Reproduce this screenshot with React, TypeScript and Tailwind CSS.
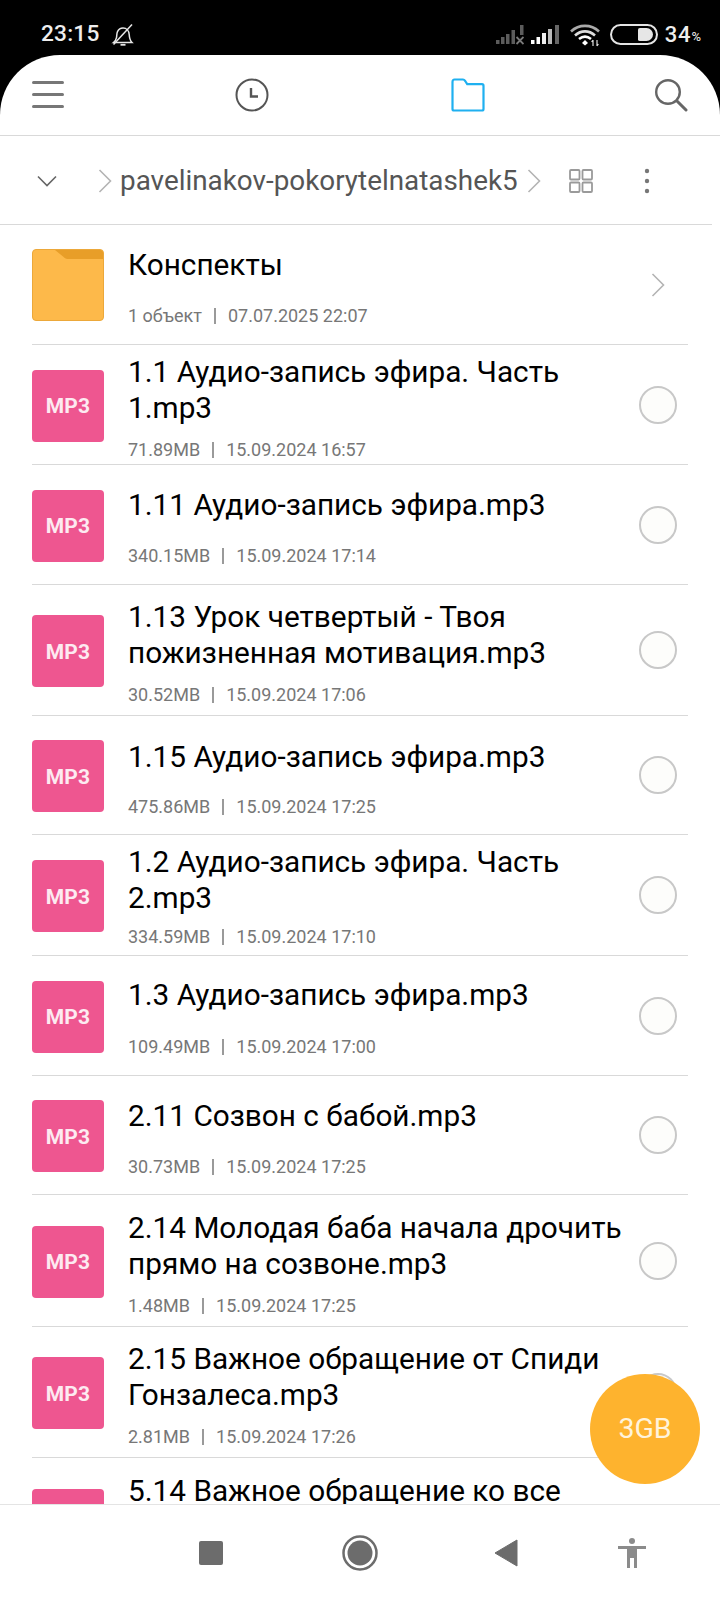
const font = { fontFamily: 'Roboto, "Noto Sans", sans-serif' };

type Row = { title: string[]; meta: [string, string]; h: string; pt: string; mt: string };

const rows: Row[] = [
  { title: ["1.1 Аудио-запись эфира. Часть", "1.mp3"], meta: ["71.89MB", "15.09.2024 16:57"], h: "h-[120px]", pt: "pt-[9px]", mt: "mt-[13px]" },
  { title: ["1.11 Аудио-запись эфира.mp3"], meta: ["340.15MB", "15.09.2024 17:14"], h: "h-[120px]", pt: "pt-[22px]", mt: "mt-[22px]" },
  { title: ["1.13 Урок четвертый - Твоя", "пожизненная мотивация.mp3"], meta: ["30.52MB", "15.09.2024 17:06"], h: "h-[131px]", pt: "pt-[14px]", mt: "mt-[13px]" },
  { title: ["1.15 Аудио-запись эфира.mp3"], meta: ["475.86MB", "15.09.2024 17:25"], h: "h-[119px]", pt: "pt-[23px]", mt: "mt-[21px]" },
  { title: ["1.2 Аудио-запись эфира. Часть", "2.mp3"], meta: ["334.59MB", "15.09.2024 17:10"], h: "h-[121px]", pt: "pt-[9px]", mt: "mt-[10px]" },
  { title: ["1.3 Аудио-запись эфира.mp3"], meta: ["109.49MB", "15.09.2024 17:00"], h: "h-[120px]", pt: "pt-[21px]", mt: "mt-[23px]" },
  { title: ["2.11 Созвон с бабой.mp3"], meta: ["30.73MB", "15.09.2024 17:25"], h: "h-[119px]", pt: "pt-[22px]", mt: "mt-[22px]" },
  { title: ["2.14 Молодая баба начала дрочить", "прямо на созвоне.mp3"], meta: ["1.48MB", "15.09.2024 17:25"], h: "h-[132px]", pt: "pt-[15px]", mt: "mt-[13px]" },
  { title: ["2.15 Важное обращение от Спиди", "Гонзалеса.mp3"], meta: ["2.81MB", "15.09.2024 17:26"], h: "h-[131px]", pt: "pt-[14px]", mt: "mt-[13px]" },
  { title: ["5.14 Важное обращение ко все", "девушкам.mp3"], meta: ["5.10MB", "15.09.2024 17:26"], h: "h-[133px]", pt: "pt-[15px]", mt: "mt-[12px]" },
];

function Meta({ a, b, className }: { a: string; b: string; className?: string }) {
  return (
    <div className={`flex items-center text-[18px] leading-[22px] text-[#777777] ${className ?? ""}`}>
      <span>{a}</span>
      <span className="mx-[12px] h-[16px] w-[2px] bg-[#9a9a9a]" />
      <span>{b}</span>
    </div>
  );
}

function StatusIcons() {
  return (
    <div className="flex items-center">
      <svg width="28" height="20" viewBox="0 0 28 20" className="mr-[7px]">
        <g fill="#5c5c5c">
          <rect x="0" y="15" width="3.500" height="4" />
          <rect x="5" y="12" width="3.500" height="7" />
          <rect x="10" y="9" width="3.500" height="10" />
          <rect x="15.500" y="5" width="3.500" height="14" />
          <rect x="24" y="0" width="3.500" height="10" />
        </g>
        <path d="M20.500 12l7 7M27.500 12l-7 7" stroke="#7a7a7a" strokeWidth="1.800" />
      </svg>
      <svg width="28" height="20" viewBox="0 0 28 20" className="mr-[11px]">
        <rect x="0" y="15" width="3.500" height="4" fill="#fff" />
        <rect x="5.500" y="12" width="3.500" height="7" fill="#fff" />
        <rect x="11" y="8" width="4" height="11" fill="#eee" />
        <rect x="17" y="4" width="4" height="15" fill="#bbb" />
        <rect x="24" y="0" width="4" height="19" fill="#666" />
      </svg>
      <svg width="30" height="24" viewBox="0 0 30 24" className="mr-[10px]">
        <path d="M1 8.500C9 1 21 1 29 8.500" fill="none" stroke="#aaaaaa" strokeWidth="2.600" />
        <path d="M5 12.500C11 7 19 7 25 12.500" fill="none" stroke="#dddddd" strokeWidth="2.600" />
        <path d="M9 16C13 12.800 17 12.800 21 16" fill="none" stroke="#fff" strokeWidth="2.600" />
        <path d="M12 20l3-3 3 3-3 2.500z" fill="#fff" />
        <path d="M23 23v-6M23 17l-1.400 2M27 17v6M27 23l1.400-2" stroke="#ddd" strokeWidth="1.200" fill="none" />
      </svg>
      <div className="mr-[7px] flex h-[21px] w-[48px] items-center justify-end rounded-full border-2 border-[#e4e4e4] pr-[3px]">
        <div className="h-[13px] w-[15px] rounded-l-[2px] rounded-r-[7px] bg-[#e6e6e6]" />
      </div>
      <span className="text-[22px] font-medium leading-none tracking-[0.8px] text-[#eeeeee]">34</span>
      <span className="mt-[4px] text-[13px] font-medium leading-none text-[#dddddd]">%</span>
    </div>
  );
}

export default function App() {
  return (
    <div style={font} className="relative flex h-[1600px] w-[720px] flex-col overflow-hidden bg-black">
      <div className="flex h-[55px] shrink-0 items-center justify-between pl-[41px] pr-[19px] pt-[14px]">
        <div className="flex items-center">
          <span className="text-[22.700px] font-medium leading-none tracking-[0.2px] text-[#eeeeee]">23:15</span>
          <svg width="24" height="24" viewBox="0 0 24 24" className="ml-[11px]" fill="none" stroke="#e6e6e6" strokeWidth="1.500">
            <path d="M2.500 19.500h18.500c-2.500-2.500-2.600-4.500-2.800-8-.2-3.600-2.600-6.400-6.200-6.400-2.500 0-4.500 1.500-5.500 3.500-.9 1.800-.6 4.200-1 6-.4 2-1.300 3.500-3 4.900z" />
            <path d="M2.500 21.500L21 1.500" />
            <path d="M9.500 21.800h5" strokeWidth="1.800" />
          </svg>
        </div>
        <StatusIcons />
      </div>

      <div className="flex min-h-0 flex-1 flex-col rounded-t-[60px] bg-white">
        <div className="flex h-[81px] shrink-0 items-center border-b border-[#d9d9d9] pl-[32px]">
          <svg width="32" height="28" viewBox="0 0 32 28">
            <rect y="0" width="32" height="3" rx="1.500" fill="#777" />
            <rect y="12" width="32" height="3" rx="1.500" fill="#777" />
            <rect y="24" width="32" height="3" rx="1.500" fill="#777" />
          </svg>
          <svg width="34" height="34" viewBox="0 0 34 34" className="ml-[171px]" fill="none" stroke="#555" strokeWidth="2">
            <circle cx="17" cy="17" r="15.500" />
            <path d="M16 10v8.500h7" strokeWidth="2.400" />
          </svg>
          <svg width="34" height="34" viewBox="0 0 34 34" className="ml-[182px]" fill="none" stroke="#1fb0f0" strokeWidth="2.200" strokeLinejoin="round">
            <path d="M1.500 4c0-1.500.8-2.500 2-2.500h8.500c1 0 1.500.5 2.200 1.500l2 3.200H31c.8 0 1.500.6 1.500 1.500V31c0 .8-.6 1.500-1.500 1.500H3C2.100 32.500 1.500 31.800 1.500 31z" />
          </svg>
          <svg width="34" height="34" viewBox="0 0 34 34" className="ml-[169px]" fill="none" stroke="#666" strokeWidth="2.400" strokeLinecap="round">
            <circle cx="14" cy="14" r="11.800" />
            <path d="M23 23l9 9" strokeWidth="3" />
          </svg>
        </div>

        <div className="mr-[8px] flex h-[89px] shrink-0 items-center border-b border-[#d9d9d9] pt-[2px]">
          <svg width="20" height="12" viewBox="0 0 20 12" className="ml-[37px]" fill="none" stroke="#666" strokeWidth="1.600">
            <path d="M1 1.500l9 9 9-9" />
          </svg>
          <svg width="14" height="24" viewBox="0 0 14 24" className="ml-[41px]" fill="none" stroke="#b4b4b4" strokeWidth="1.600">
            <path d="M1.500 1l11 11-11 11" />
          </svg>
          <span className="ml-[8px] text-[27.850px] leading-none text-[#555555]">pavelinakov-pokorytelnatashek5</span>
          <svg width="14" height="24" viewBox="0 0 14 24" className="ml-[9px]" fill="none" stroke="#b4b4b4" strokeWidth="1.600">
            <path d="M1.500 1l11 11-11 11" />
          </svg>
          <svg width="24" height="24" viewBox="0 0 24 24" className="ml-[28px]" fill="none" stroke="#9a9a9a" strokeWidth="1.800">
            <rect x="1" y="1" width="9.500" height="9.500" rx="1" />
            <rect x="13.500" y="1" width="9.500" height="9.500" rx="1" />
            <rect x="1" y="13.500" width="9.500" height="9.500" rx="1" />
            <rect x="13.500" y="13.500" width="9.500" height="9.500" rx="1" />
          </svg>
          <svg width="6" height="26" viewBox="0 0 6 26" className="ml-[51px]" fill="#777">
            <circle cx="3" cy="3" r="2.200" />
            <circle cx="3" cy="13" r="2.200" />
            <circle cx="3" cy="23" r="2.200" />
          </svg>
        </div>

        <div className="relative min-h-0 flex-1">
          <div className="h-full overflow-hidden pl-[32px]">
            <div className="relative mr-[32px] flex h-[120px] border-b border-[#d9d9d9]">
              <div className="mt-[24px] h-[72px] w-[72px] shrink-0 overflow-hidden rounded-[4px] border border-[#eca83a] bg-[#fdb94a]">
                <svg width="72" height="72" viewBox="0 0 72 72" className="block">
                  <path d="M22 0h50v9H36c-3 0-4-.5-6-2.500z" fill="#e89e28" />
                </svg>
              </div>
              <div className="ml-[24px] pt-[22px]">
                <div className="text-[29.750px] leading-[36px] text-black">Конспекты</div>
                <Meta a="1 объект" b="07.07.2025 22:07" className="mt-[22px]" />
              </div>
              <svg width="14" height="24" viewBox="0 0 14 24" className="absolute right-[23px] top-[48px]" fill="none" stroke="#b4b4b4" strokeWidth="1.600">
                <path d="M1.500 1l11 11-11 11" />
              </svg>
            </div>
            {rows.map((r) => (
              <div key={r.title[0]} className={`mr-[32px] flex shrink-0 items-start border-b border-[#d9d9d9] ${r.h}`}>
                <div className="flex h-full shrink-0 items-center pt-[2px]">
                  <div className="flex h-[72px] w-[72px] items-center justify-center rounded-[4px] bg-[#ee5690] pt-[2px] text-[21px] font-bold leading-none tracking-[0.2px] text-[#fdeaf1]">
                    MP3
                  </div>
                </div>
                <div className={`ml-[24px] min-w-0 flex-1 ${r.pt}`}>
                  <div className="whitespace-nowrap text-[29.750px] leading-[36px] text-black">
                    {r.title.map((t) => (
                      <div key={t}>{t}</div>
                    ))}
                  </div>
                  <Meta a={r.meta[0]} b={r.meta[1]} className={r.mt} />
                </div>
                <div className="flex h-full shrink-0 items-center">
                  <div className="mr-[11px] h-[38px] w-[38px] rounded-full border-2 border-[#c8c8c8] bg-[#fdfdfb]" />
                </div>
              </div>
            ))}
          </div>
          <div className="absolute left-[590px] top-[1149px] flex h-[110px] w-[110px] items-center justify-center rounded-full bg-[#feb32e] text-[28.500px] leading-none text-[#fff3dc]">
            3GB
          </div>
        </div>

        <div className="flex h-[96px] shrink-0 items-center border-t border-[#e4e4e4] bg-white">
          <div className="ml-[199px] h-[24px] w-[24px] rounded-[2px] bg-[#6c6c6c]" />
          <svg width="36" height="36" viewBox="0 0 36 36" className="ml-[119px]">
            <circle cx="18" cy="18" r="16.500" fill="none" stroke="#6c6c6c" strokeWidth="2.500" />
            <circle cx="18" cy="18" r="12.500" fill="#6c6c6c" />
          </svg>
          <svg width="24" height="28" viewBox="0 0 24 28" className="ml-[116px]">
            <path d="M23 1v26L1 14z" fill="#6c6c6c" stroke="#6c6c6c" strokeLinejoin="round" />
          </svg>
          <svg width="28" height="30" viewBox="0 0 28 30" className="ml-[100px]" fill="#8b8b8b">
            <circle cx="14" cy="3" r="3" />
            <path d="M0 8h28v3H19v19h-3V20h-4v10H9V11H0z" />
          </svg>
        </div>
      </div>
    </div>
  );
}
